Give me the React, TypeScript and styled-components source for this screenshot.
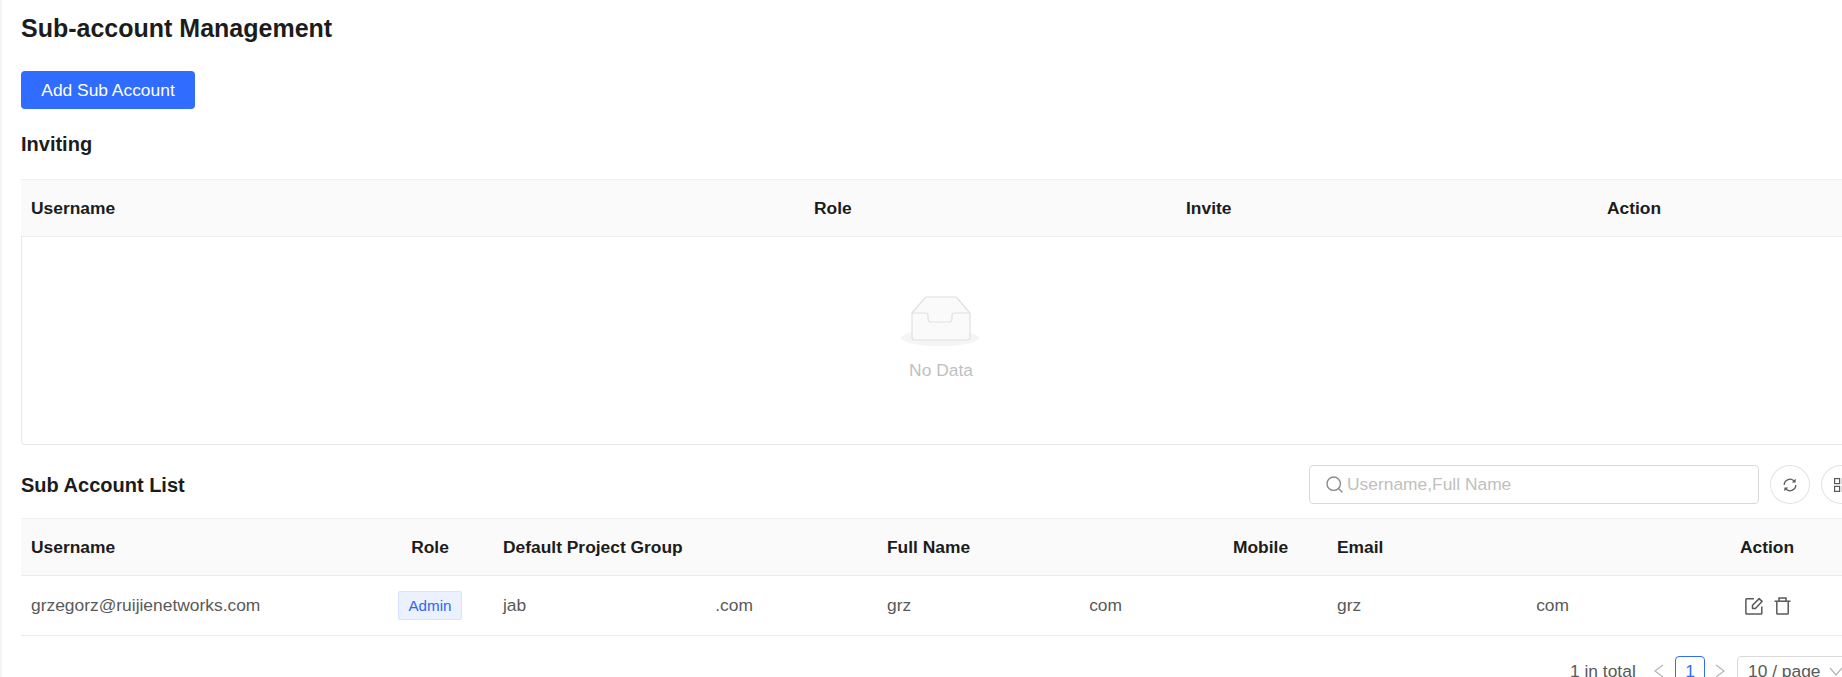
import React from 'react';
import styled, { createGlobalStyle } from 'styled-components';

const GlobalStyle = createGlobalStyle`
  html, body {
    margin: 0;
    padding: 0;
    background: #fff;
    overflow: hidden;
  }
  body {
    font-family: "Liberation Sans", Arial, sans-serif;
    color: #1c1c1c;
  }
`;

const Page = styled.div`
  width: 1900px;
  height: 677px;
  box-sizing: border-box;
  padding-left: 19px;
  border-left: 2px solid #f4f4f4;
  overflow: hidden;
`;

const Title = styled.h1`
  margin: 0;
  padding-top: 14px;
  height: 71px;
  box-sizing: border-box;
  font-size: 25px;
  line-height: 28px;
  font-weight: 700;
`;

const PrimaryButton = styled.button`
  display: block;
  width: 174px;
  height: 38px;
  padding: 0;
  border: none;
  border-radius: 4px;
  background: #2f6cff;
  color: #fff;
  font: 17.4px "Liberation Sans", Arial, sans-serif;
`;

const SectionTitle = styled.h2`
  margin: 0;
  font-size: 20px;
  line-height: 22px;
  font-weight: 700;
`;

const InvitingTitle = styled(SectionTitle)`
  padding: 24px 0;
`;

const Table = styled.div`
  width: 1840px;
`;

const HeaderRow = styled.div<{ $columns: string }>`
  display: grid;
  grid-template-columns: ${p => p.$columns};
  height: 58px;
  box-sizing: border-box;
  align-items: center;
  background: #fafafa;
  border-top: 1px solid #f0f0f0;
  border-bottom: 1px solid #ececec;
  font-size: 17.4px;
  font-weight: 700;
`;

const HeaderCell = styled.div<{ $center?: boolean }>`
  padding: 0 10px;
  text-align: ${p => (p.$center ? 'center' : 'left')};
`;

const EmptyBody = styled.div`
  height: 208px;
  box-sizing: border-box;
  border: 1px solid #e8e8e8;
  border-top: none;
  border-radius: 0 0 4px 4px;
  display: flex;
  flex-direction: column;
  align-items: center;
  padding-top: 59px;
`;

const EmptyText = styled.div`
  margin-top: 12px;
  font-size: 17.4px;
  line-height: 20px;
  color: #bfbfbf;
`;

const ListToolbar = styled.div`
  display: flex;
  align-items: center;
  height: 73px;
  padding-top: 6px;
  box-sizing: border-box;
`;

const ListTitle = styled(SectionTitle)`
  width: 1288px;
`;

const SearchBox = styled.div`
  display: flex;
  align-items: center;
  gap: 4px;
  width: 450px;
  height: 39px;
  box-sizing: border-box;
  padding: 0 16px;
  border: 1px solid #d9d9d9;
  border-radius: 4px;
  color: #8c8c8c;
`;

const SearchInput = styled.input`
  flex: 1;
  min-width: 0;
  border: none;
  outline: none;
  padding: 0;
  font: 17.4px "Liberation Sans", Arial, sans-serif;
  &::placeholder {
    color: #bfbfbf;
    opacity: 1;
  }
`;

const CircleButton = styled.button`
  flex: none;
  display: flex;
  align-items: center;
  justify-content: center;
  width: 40px;
  height: 39px;
  margin-left: 11px;
  padding: 0;
  background: #fff;
  border: 1px solid #e3e3e3;
  border-radius: 50%;
  color: #595959;
`;

const BodyRow = styled.div<{ $columns: string }>`
  display: grid;
  grid-template-columns: ${p => p.$columns};
  height: 60px;
  box-sizing: border-box;
  align-items: center;
  border-bottom: 1px solid #ececec;
  font-size: 17.4px;
  color: #595959;
`;

const BodyCell = styled.div`
  padding: 0 10px;
  white-space: nowrap;
`;

const TagCell = styled(BodyCell)`
  display: flex;
  justify-content: center;
`;

const Tag = styled.span`
  box-sizing: border-box;
  width: 64px;
  height: 29px;
  line-height: 27px;
  text-align: center;
  font-size: 15.2px;
  color: #2f66f0;
  background: #ebf1ff;
  border: 1px solid #d6e2ff;
  border-radius: 2px;
`;

// white patch over the private part of an address, as in the reference
const Masked = styled.span<{ $gap: number }>`
  display: inline-block;
  width: ${p => p.$gap}px;
`;

const ActionCell = styled(BodyCell)`
  display: flex;
  align-items: center;
  gap: 11px;
  padding-left: 15px;
`;

const Pagination = styled.div`
  display: flex;
  align-items: center;
  height: 30px;
  margin-top: 20px;
  padding-left: 1549px;
  font-size: 17.4px;
  white-space: nowrap;
  color: #595959;
`;

const Total = styled.span`
  width: 80px;
`;

const PageArrow = styled.span<{ $inset: number }>`
  display: flex;
  box-sizing: border-box;
  width: 25px;
  padding-left: ${p => p.$inset}px;
  color: #b5b5b5;
`;

const PageNumber = styled.span`
  box-sizing: border-box;
  width: 30px;
  height: 30px;
  line-height: 28px;
  text-align: center;
  color: #2f6cff;
  border: 1px solid #2f6cff;
  border-radius: 4px;
`;

const PageSize = styled.span`
  display: flex;
  align-items: center;
  gap: 8px;
  box-sizing: border-box;
  width: 120px;
  height: 30px;
  margin-left: 7px;
  padding: 0 10px;
  border: 1px solid #d9d9d9;
  border-radius: 4px;
`;

const SizeCaret = styled.span`
  display: flex;
  color: #b5b5b5;
`;

const invitingColumns = '783px 372px 421px 1fr';
const listColumns = '346px 126px 384px 346px 104px 403px 1fr';

const InboxIllustration = () => (
  <svg width="80" height="52" viewBox="0 0 80 52" fill="none">
    <ellipse cx="39" cy="42" rx="39" ry="8" fill="#f5f5f5" />
    <path
      d="M11 17 L24 2 a3 3 0 0 1 2 -1 H54 a3 3 0 0 1 2 1 L69 17 V41 a3 3 0 0 1 -3 3 H14 a3 3 0 0 1 -3 -3 Z"
      fill="#fafafa"
      stroke="#e0e0e0"
      strokeWidth="1.2"
    />
    <path
      d="M11 17 H25 a2 2 0 0 1 2 2 V23 a3 3 0 0 0 3 3 H48 a3 3 0 0 0 3 -3 V19 a2 2 0 0 1 2 -2 H69"
      stroke="#e0e0e0"
      strokeWidth="1.2"
    />
  </svg>
);

const SearchIcon = () => (
  <svg width="17" height="17" viewBox="0 0 17 17" fill="none" stroke="currentColor" strokeWidth="1.4">
    <circle cx="7.7" cy="7.7" r="6.7" />
    <path d="M12.5 12.5 L16 16" strokeLinecap="round" />
  </svg>
);

const RefreshIcon = () => (
  <svg width="16" height="16" viewBox="0 0 16 16" fill="none">
    <path d="M2.2 8a5.8 5.8 0 0 1 9.6 -4.3" stroke="currentColor" strokeWidth="1.3" />
    <path d="M13.8 8a5.8 5.8 0 0 1 -9.6 4.3" stroke="currentColor" strokeWidth="1.3" />
    <path d="M13.6 1.8 V5.6 H9.8 Z" fill="currentColor" />
    <path d="M2.4 14.2 V10.4 H6.2 Z" fill="currentColor" />
  </svg>
);

const ColumnsIcon = () => (
  <svg width="14" height="14" viewBox="0 0 14 14" fill="none" stroke="currentColor" strokeWidth="1.2">
    <rect x="0.6" y="0.6" width="5" height="5" />
    <rect x="8.4" y="0.6" width="5" height="5" />
    <rect x="0.6" y="8.4" width="5" height="5" />
    <rect x="8.4" y="8.4" width="5" height="5" />
  </svg>
);

const EditIcon = () => (
  <svg width="18" height="18" viewBox="0 0 18 18" fill="none" stroke="currentColor" strokeWidth="1.5">
    <path d="M9 1.7 H1.7 a0.8 0.8 0 0 0 -0.8 0.8 V16.3 a0.8 0.8 0 0 0 0.8 0.8 H16 a0.8 0.8 0 0 0 0.8 -0.8 V9.5" />
    <path d="M7.5 11.5 V8.3 L14.2 1.6 L17 4.4 L10.4 11.5 Z" strokeLinejoin="round" />
  </svg>
);

const TrashIcon = () => (
  <svg width="17" height="18" viewBox="0 0 17 18" fill="none" stroke="currentColor" strokeWidth="1.5">
    <path d="M0.5 4.2 H16.5" />
    <path d="M5 4.2 V1 H12 V4.2" />
    <path d="M2.8 4.2 V16.2 a0.8 0.8 0 0 0 0.8 0.8 H13.4 a0.8 0.8 0 0 0 0.8 -0.8 V4.2" />
  </svg>
);

const Chevron = ({ points, width, height }: { points: string; width: number; height: number }) => (
  <svg width={width} height={height} viewBox={`0 0 ${width} ${height}`} fill="none" stroke="currentColor" strokeWidth="1.2">
    <polyline points={points} />
  </svg>
);

export default function App() {
  return (
    <Page>
      <GlobalStyle />
      <Title>Sub-account Management</Title>
      <PrimaryButton>Add Sub Account</PrimaryButton>
      <InvitingTitle>Inviting</InvitingTitle>

      <Table>
        <HeaderRow $columns={invitingColumns}>
          <HeaderCell>Username</HeaderCell>
          <HeaderCell>Role</HeaderCell>
          <HeaderCell>Invite</HeaderCell>
          <HeaderCell>Action</HeaderCell>
        </HeaderRow>
        <EmptyBody>
          <InboxIllustration />
          <EmptyText>No Data</EmptyText>
        </EmptyBody>
      </Table>

      <ListToolbar>
        <ListTitle>Sub Account List</ListTitle>
        <SearchBox>
          <SearchIcon />
          <SearchInput placeholder="Username,Full Name" />
        </SearchBox>
        <CircleButton>
          <RefreshIcon />
        </CircleButton>
        <CircleButton>
          <ColumnsIcon />
        </CircleButton>
      </ListToolbar>

      <Table>
        <HeaderRow $columns={listColumns}>
          <HeaderCell>Username</HeaderCell>
          <HeaderCell $center>Role</HeaderCell>
          <HeaderCell>Default Project Group</HeaderCell>
          <HeaderCell>Full Name</HeaderCell>
          <HeaderCell>Mobile</HeaderCell>
          <HeaderCell>Email</HeaderCell>
          <HeaderCell>Action</HeaderCell>
        </HeaderRow>
        <BodyRow $columns={listColumns}>
          <BodyCell>grzegorz@ruijienetworks.com</BodyCell>
          <TagCell>
            <Tag>Admin</Tag>
          </TagCell>
          <BodyCell>
            jab<Masked $gap={189} />.com
          </BodyCell>
          <BodyCell>
            grz<Masked $gap={178} />com
          </BodyCell>
          <BodyCell />
          <BodyCell>
            grz<Masked $gap={175} />com
          </BodyCell>
          <ActionCell>
            <EditIcon />
            <TrashIcon />
          </ActionCell>
        </BodyRow>
      </Table>

      <Pagination>
        <Total>1 in total</Total>
        <PageArrow $inset={4}>
          <Chevron points="9,1 1,7 9,13" width={10} height={14} />
        </PageArrow>
        <PageNumber>1</PageNumber>
        <PageArrow $inset={10}>
          <Chevron points="1,1 9,7 1,13" width={10} height={14} />
        </PageArrow>
        <PageSize>
          10 / page
          <SizeCaret>
            <Chevron points="1,1 7,8 13,1" width={14} height={9} />
          </SizeCaret>
        </PageSize>
      </Pagination>
    </Page>
  );
}
